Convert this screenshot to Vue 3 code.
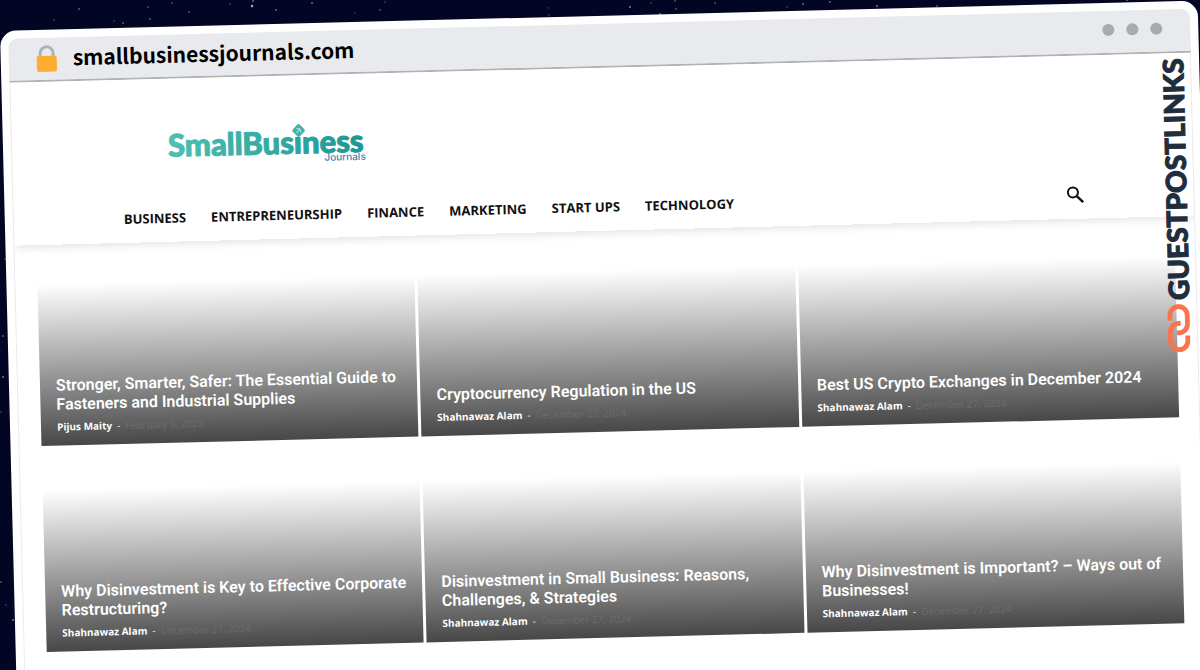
<script setup>
const links = ['Business', 'Entrepreneurship', 'Finance', 'Marketing', 'Start Ups', 'Technology']

const posts = [
  { title: 'Stronger, Smarter, Safer: The Essential Guide to Fasteners and Industrial Supplies', author: 'Pijus Maity', date: 'February 3, 2025' },
  { title: 'Cryptocurrency Regulation in the US', author: 'Shahnawaz Alam', date: 'December 27, 2024' },
  { title: 'Best US Crypto Exchanges in December 2024', author: 'Shahnawaz Alam', date: 'December 27, 2024' },
  { title: 'Why Disinvestment is Key to Effective Corporate Restructuring?', author: 'Shahnawaz Alam', date: 'December 27, 2024' },
  { title: 'Disinvestment in Small Business: Reasons, Challenges, & Strategies', author: 'Shahnawaz Alam', date: 'December 27, 2024' },
  { title: 'Why Disinvestment is Important? – Ways out of Businesses!', author: 'Shahnawaz Alam', date: 'December 27, 2024' },
]

// x, y, radius, opacity
const stars = [
  [79, 9, 1, 0.7], [54, 20, 1, 0.5], [148, 7, 1, 0.6], [172, 3, 1, 0.5], [189, 12, 1, 0.6],
  [230, 4, 1, 0.5], [252, 6, 1.5, 0.8], [253, 1, 1, 0.8], [276, 10, 1, 0.8], [312, 3, 1, 0.8],
  [380, 10, 1, 0.6], [150, 19, 1, 0.7], [123, 23, 1, 0.7], [114, 21, 1, 0.4], [355, 13, 1, 0.3],
  [385, 2, 1, 0.4], [431, 23, 1, 0.5], [548, 8, 1, 0.3], [549, 15, 1, 0.4], [630, 7, 1, 1],
  [636, 17, 1, 0.6], [651, 3, 1, 0.4], [660, 14, 1, 0.9], [675, 1, 1, 0.6], [676, 9, 1, 0.6],
  [704, 15, 1, 0.6], [715, 3, 1, 0.6], [787, 7, 1, 0.4], [803, 4, 1, 0.8], [830, 2, 1, 0.7],
  [877, 6, 1, 0.9], [937, 6, 1, 0.6], [1127, 0, 1, 0.8], [5, 259, 1, 0.4], [3, 336, 1, 0.7],
  [3, 377, 1, 0.9], [1, 412, 1, 0.4], [1, 582, 1, 0.6], [6, 605, 1, 0.4], [13, 620, 1, 0.9],
]
</script>

<template>
  <div class="page">
    <svg class="sky" aria-hidden="true">
      <circle v-for="(s, i) in stars" :key="i" :cx="s[0]" :cy="s[1]" :r="s[2] * 0.8" :opacity="s[3]" fill="#cdd6f5" />
    </svg>

    <div class="browser">
      <div class="bar">
        <svg class="lock" width="22" height="28" viewBox="0 0 22 28" aria-hidden="true">
          <path d="M4.500 13V8.500a6.500 6.500 0 0 1 13 0V13" fill="none" stroke="#a9b3bc" stroke-width="3" />
          <rect x="1" y="11" width="20" height="16" rx="2" fill="#ffac33" />
        </svg>
        <span class="url">smallbusinessjournals.com</span>
        <span class="dots"><i></i><i></i><i></i></span>
      </div>

      <div class="site">
        <header class="header">
          <a class="logo" href="#" aria-label="SmallBusiness Journals">
            <svg width="200" height="42" viewBox="0 0 200 42">
              <defs>
                <linearGradient id="teal" x1="0" x2="1">
                  <stop offset="0" stop-color="#4fbfb1" />
                  <stop offset="1" stop-color="#1b9795" />
                </linearGradient>
              </defs>
              <text class="brand" x="0" y="31" fill="url(#teal)" stroke="url(#teal)">SmallBusıness</text>
              <g transform="rotate(-45 131 8)">
                <rect x="126" y="3" width="10" height="10" rx="2" fill="#43b3ab" />
                <path d="M128 8h5M131 5l2 3-2 3" stroke="#b8e5e0" fill="none" />
              </g>
              <text class="brand-sub" x="156" y="39" fill="#3c83b5">Journals</text>
            </svg>
          </a>
          <div class="menu">
            <nav class="nav">
              <a v-for="l in links" :key="l" href="#">{{ l }}</a>
            </nav>
            <button class="search" aria-label="Search">
              <svg width="18" height="18" viewBox="0 0 18 18" fill="none" stroke="#111">
                <circle cx="6.500" cy="6.500" r="5" stroke-width="2" />
                <path d="M10.500 10.500l6 6" stroke-width="2.500" />
              </svg>
            </button>
          </div>
        </header>

        <main class="grid">
          <article v-for="p in posts" :key="p.title" class="card">
            <h3><a href="#">{{ p.title }}</a></h3>
            <p class="meta"><a href="#">{{ p.author }}</a><span class="dash">-</span><time>{{ p.date }}</time></p>
          </article>
        </main>
      </div>

      <div class="badge">
        <svg width="24" height="48" viewBox="0 0 24 50" fill="none" stroke="#f9734d" stroke-width="5" aria-hidden="true">
          <path d="M10 30h2a9 9 0 0 0 9-9V11.500a9 9 0 0 0-18 0V17" />
          <path d="M14 20h-2a9 9 0 0 0-9 9v9.500a9 9 0 0 0 18 0V33" />
        </svg>
        <span>GUESTPOSTLINKS</span>
      </div>
    </div>
  </div>
</template>

<style>
body {
  margin: 0;
  background: #020524;
}
</style>

<style scoped>
.page {
  position: relative;
  box-sizing: border-box;
  height: 100vh;
  padding: 31px 2px 0 0;
  overflow: hidden;
  background: #020524;
}
.sky {
  position: absolute;
  inset: 0;
  width: 100%;
  height: 100%;
}
a {
  color: inherit;
  text-decoration: none;
}
.browser {
  position: relative;
  box-sizing: border-box;
  min-height: 110vh;
  padding: 8px;
  border-radius: 16px;
  background: #fff;
  transform: rotate(-1.45deg);
  transform-origin: 0 0;
}
.bar {
  display: flex;
  align-items: center;
  height: 42px;
  padding: 0 28px 0 27px;
  border-bottom: 2px solid #b0b2b6;
  border-radius: 9px 9px 0 0;
  background: #e8eaed;
}
.url {
  margin: 0 0 4px 15px;
  font: 700 21px/32px "Noto Sans CJK SC", "Noto Sans", sans-serif;
  color: #000;
}
.dots {
  display: flex;
  gap: 12px;
  margin: 0 0 4px auto;
}
.dots i {
  width: 12px;
  height: 12px;
  border-radius: 50%;
  background: #a8aaae;
}
.site {
  min-height: 105vh;
  border: solid #ececee;
  border-width: 0 1px;
}
.header {
  display: flex;
  flex-direction: column;
  height: 163px;
  box-shadow: 0 2px 10px rgba(0, 0, 0, 0.12);
  clip-path: inset(0 0 -20px 0);
}
.logo {
  align-self: flex-start;
  margin: 47px 0 0 156px;
}
.logo svg {
  display: block;
}
.brand {
  font: 900 31px Lato, sans-serif;
  stroke-width: 1px;
  stroke-linejoin: round;
}
.brand-sub {
  font: 500 10px Inter, sans-serif;
}
.menu {
  display: flex;
  align-items: center;
  justify-content: space-between;
  margin: 39px 109px 0 110px;
}
.nav {
  display: flex;
  gap: 25px;
  font: 700 13px/22px "Open Sans", sans-serif;
  text-transform: uppercase;
  color: #111;
}
.search {
  display: flex;
  padding: 0;
  border: 0;
  background: none;
}
.grid {
  display: grid;
  grid-template-columns: repeat(3, 1fr);
  gap: 44px 3px;
  padding: 39px 20px 0 22px;
}
.card {
  display: flex;
  flex-direction: column;
  justify-content: flex-end;
  box-sizing: border-box;
  min-height: 162px;
  padding: 0 16px 11px;
  background: linear-gradient(to bottom, rgba(0, 0, 0, 0), rgba(0, 0, 0, 0.72));
  color: #fff;
}
.card h3 {
  margin: 0;
  font: 600 16px/19px Roboto, sans-serif;
}
.meta {
  display: flex;
  gap: 5px;
  margin: 5px 0 0;
  font: 10px/16px "Open Sans", sans-serif;
}
.meta a {
  font-weight: 700;
}
.meta time {
  color: #6c6c6c;
}
.badge {
  position: absolute;
  top: 57px;
  right: 15px;
  display: flex;
  align-items: center;
  gap: 4px;
  writing-mode: vertical-rl;
  transform: rotate(180deg);
  font: 900 28px/24px Lato, sans-serif;
  color: #1f2d3d;
  -webkit-text-stroke: 1px #1f2d3d;
}
</style>
